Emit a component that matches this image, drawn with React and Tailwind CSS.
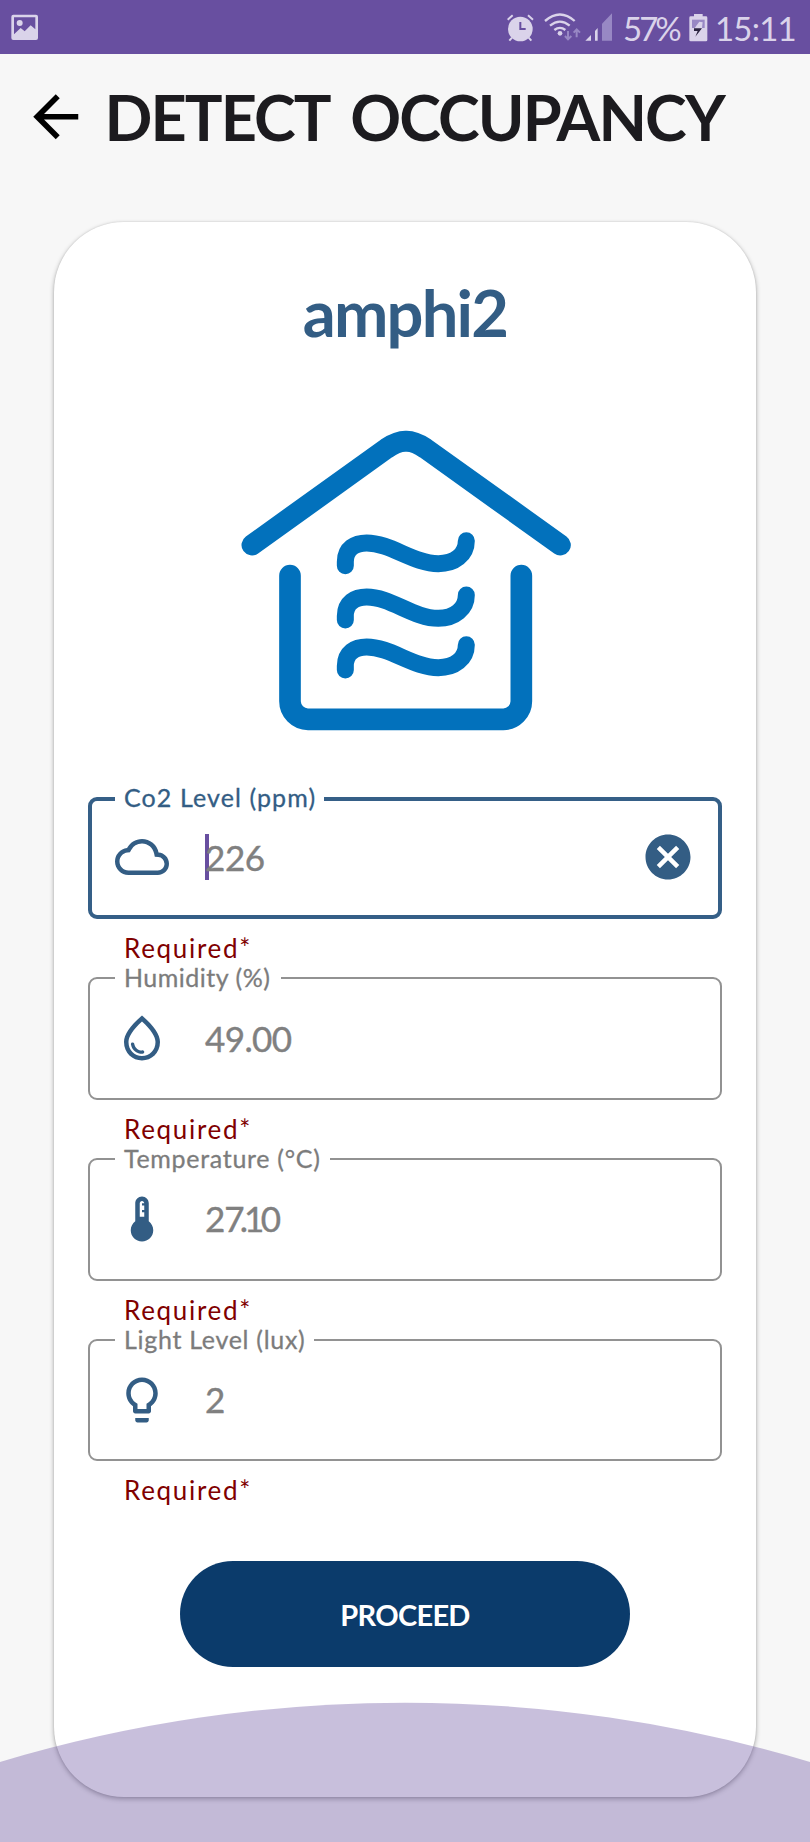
const ICONS = {
  cloud:
    "M19.35 10.04A7.49 7.49 0 0 0 12 4C9.11 4 6.6 5.64 5.35 8.04A5.994 5.994 0 0 0 0 14c0 3.31 2.69 6 6 6h13c2.76 0 5-2.24 5-5 0-2.64-2.05-4.78-4.65-4.96zM19 18H6c-2.21 0-4-1.79-4-4 0-2.05 1.53-3.76 3.56-3.97l1.07-.11.5-.95A5.469 5.469 0 0 1 12 6c2.62 0 4.88 1.86 5.39 4.43l.3 1.5 1.53.11A2.98 2.98 0 0 1 22 15c0 1.65-1.35 3-3 3z",
  drop:
    "M12 2c-5.33 4.55-8 8.48-8 11.8 0 4.98 3.8 8.2 8 8.2s8-3.22 8-8.2c0-3.32-2.67-7.25-8-11.8zm0 18c-3.35 0-6-2.57-6-6.2 0-2.34 1.95-5.44 6-9.14 4.05 3.7 6 6.79 6 9.14 0 3.63-2.65 6.2-6 6.2zm-4.17-6c.37 0 .67.26.74.62.41 2.22 2.28 2.98 3.64 2.87.43-.02.79.32.79.75 0 .4-.32.73-.72.75-2.13.13-4.62-1.09-5.19-4.12A.75.75 0 0 1 7.83 14z",
  thermometer:
    "M15 13V5c0-1.66-1.34-3-3-3S9 3.34 9 5v8c-1.21.91-2 2.37-2 4 0 2.76 2.24 5 5 5s5-2.24 5-5c0-1.63-.79-3.09-2-4zm-4-8c0-.55.45-1 1-1s1 .45 1 1h-1v1h1v2h-1v1h1v2h-2V5z",
  bulb:
    "M9 21c0 .55.45 1 1 1h4c.55 0 1-.45 1-1v-1H9v1zm3-19C8.14 2 5 5.14 5 9c0 2.38 1.19 4.47 3 5.74V17c0 .55.45 1 1 1h6c.55 0 1-.45 1-1v-2.26c1.81-1.27 3-3.36 3-5.74 0-3.86-3.14-7-7-7zm2.85 11.1l-.85.6V16h-4v-2.3l-.85-.6A4.997 4.997 0 0 1 7 9c0-2.76 2.24-5 5-5s5 2.24 5 5c0 1.63-.8 3.16-2.15 4.1z",
  back: "M20 11H7.83l5.59-5.59L12 4l-8 8 8 8 1.41-1.41L7.83 13H20v-2z",
  clear:
    "M12 2C6.47 2 2 6.47 2 12s4.47 10 10 10 10-4.47 10-10S17.53 2 12 2zm5 13.59L15.59 17 12 13.41 8.41 17 7 15.59 10.59 12 7 8.41 8.41 7 12 10.59 15.59 7 17 8.41 13.41 12 17 15.59z",
};

function Icon({ name, className }) {
  return (
    <svg viewBox="0 0 24 24" fill="currentColor" className={`shrink-0 ${className}`}>
      <path d={ICONS[name]} />
    </svg>
  );
}

function StatusBar() {
  return (
    <div className="flex h-[54px] items-start bg-[#684fa0] text-[#dad3ea]">
      <svg viewBox="0 0 150 162" className="h-[54px] w-[50px]">
        <path
          fill="currentColor"
          fillRule="evenodd"
          d="M40 44H108Q114 44 114 50V114Q114 120 108 120H40Q34 120 34 114V50Q34 44 40 44ZM42 52V103L62 84L74 94L92 76L106 88V52Z"
        />
        <circle cx="59" cy="69" r="9" fill="currentColor" />
      </svg>
      <svg viewBox="285 0 360 162" className="ml-[450px] h-[54px] w-[120px]">
        <g fill="none" stroke="currentColor">
          <path strokeWidth="6" d="M308 59L323 46M384 59L369 46M321 113L313 122M371 113L379 122" />
          <path strokeWidth="7" d="M420 63Q465 24 509 63M435 77Q465 53 494 77M448 90Q465 77 481 90" />
        </g>
        <circle cx="346" cy="87" r="37" fill="currentColor" />
        <path d="M346 66V87H362" fill="none" stroke="#684fa0" strokeWidth="6" />
        <circle cx="465" cy="100" r="7" fill="currentColor" />
        <g fill="none" stroke="#9888c4" strokeWidth="6">
          <path d="M489 93V117M480 108L489 118L499 108" />
          <path d="M515 112V88M506 98L515 88L525 98" />
        </g>
        <path fill="currentColor" d="M541 122L558 105V122ZM570 93L578 84V122H570Z" />
        <path fill="#9888c4" d="M591 71L621 40V122H591Z" />
      </svg>
      <span className="ml-[3px] w-[64px] whitespace-nowrap text-[33px] leading-[56px] tracking-[-3px]">57%</span>
      <svg viewBox="0 0 60 162" className="ml-[1px] h-[54px] w-[20px]">
        <path fill="currentColor" d="M18 42H44V49H54Q58 49 58 53V120Q58 124 54 124H8Q4 124 4 120V53Q4 49 8 49H18Z" />
        <path fill="#9888c4" d="M12 59H50V84H12Z" />
        <path fill="currentColor" d="M34 65L20 84H42L44 67Z" />
        <path fill="#2b2440" d="M18 85H42L22 110L29 93H18Z" />
      </svg>
      <span className="ml-[7px] whitespace-nowrap text-[33px] leading-[56px] tracking-[-0.8px]">15:11</span>
    </div>
  );
}

function HouseLogo() {
  return (
    <svg viewBox="0 0 1110 1020" className="mx-auto mt-[63px] h-[340px] w-[370px]" fill="none" stroke="#0271bc" strokeLinecap="round">
      <path strokeWidth="63" d="M96 405L500 115Q534 93 558 94Q582 93 616 115L1021 405" />
      <path strokeWidth="65" d="M210 497V874C210 903 234 928 264 928H850C880 928 904 903 904 874V497" />
      <g strokeWidth="51">
        <path d="M376 467V455C376 415 405 399 440 399C512 399 580 461 655 461C704 461 739 434 739 392" />
        <path d="M376 630V618C376 578 405 561 440 561C512 561 580 625 655 625C704 625 739 596 739 555" />
        <path d="M376 780V768C376 728 405 711 440 711C512 711 580 773 655 773C704 773 739 746 739 704" />
      </g>
    </svg>
  );
}

function Field({ label, labelClass, icon, active, children }) {
  return (
    <div className="flex h-[180.7px] flex-col">
      <div
        className={`relative flex h-[122.5px] shrink-0 items-center rounded-[9px] ${
          active ? "border-4 border-[#355f87] pr-[23px] pl-[23px]" : "border-2 border-[#929292] pl-[25px]"
        }`}
      >
        <span
          className={`absolute h-[26px] whitespace-nowrap bg-white pl-[9px] text-[25px] leading-[26px] [-webkit-text-stroke:0.3px_currentColor] ${labelClass} ${
            active ? "-top-[17px] left-[23px] text-[#335d84]" : "-top-[15px] left-[25px] text-[#7c7c7c]"
          }`}
        >
          {label}
        </span>
        <Icon name={icon} className="mb-px size-[54px] text-[#335d84]" />
        <div className="mb-[2px] ml-[36px] flex items-center text-[35px] leading-[46px] text-[#808080] [-webkit-text-stroke:0.4px_currentColor]">
          {active && <span className="-mr-[4px] h-[46px] w-[4px] bg-[#684fa0]" />}
          {children}
        </div>
        {active && <Icon name="clear" className="mb-[2px] ml-auto size-[54px] text-[#335d84]" />}
      </div>
      <p className="pl-[36px] text-[26px] leading-[58px] tracking-[1.7px] text-[#800000]">Required*</p>
    </div>
  );
}

export default function App() {
  return (
    <div className="relative h-[1842px] w-[810px] overflow-hidden bg-[#f7f7f7] font-['Lato',sans-serif]">
      <StatusBar />
      <header className="flex h-[124px] items-center pt-px pl-[22px]">
        <Icon name="back" className="size-[67.5px] text-black" />
        <h1 className="ml-[15px] whitespace-nowrap pt-px text-[63px] leading-[64px] font-bold tracking-[-1.9px] text-[#1c1b1f] [word-spacing:9px]">
          DETECT OCCUPANCY
        </h1>
      </header>
      <main className="mx-[54px] mt-[44px] flex h-[1575px] flex-col rounded-[70px] bg-white px-[34px] pt-[55px] shadow-[0_2px_5px_rgba(0,0,0,0.32),0_0_2px_rgba(0,0,0,0.12)]">
        <h2 className="text-center text-[65px] leading-[70px] font-bold tracking-[-1.8px] text-[#335d84]">amphi2</h2>
        <HouseLogo />
        <div className="mt-[46.7px]">
          <Field label="Co2 Level (ppm)" labelClass="w-[209px] tracking-[1.1px]" icon="cloud" active>
            <span className="relative tracking-[-0.4px]">226</span>
          </Field>
          <Field label="Humidity (%)" labelClass="w-[166px] tracking-[0.5px]" icon="drop">
            <span className="tracking-[-0.6px]">49.00</span>
          </Field>
          <Field label="Temperature (°C)" labelClass="w-[215px] tracking-[0.7px]" icon="thermometer">
            <span className="tracking-[-1px]">
              2<span className="tracking-[-5px]">7</span>
              <span className="tracking-[-4px]">.</span>
              <span className="tracking-[-3.5px]">1</span>0
            </span>
          </Field>
          <Field label="Light Level (lux)" labelClass="w-[199px] tracking-[0.7px]" icon="bulb">
            <span>2</span>
          </Field>
        </div>
        <button className="mx-auto mt-[41.5px] h-[106px] w-[450px] shrink-0 rounded-full bg-[#0b3b6b] pt-[2px] text-[29px] font-bold tracking-[-0.7px] text-white">
          PROCEED
        </button>
      </main>
      <svg viewBox="0 0 810 140" className="pointer-events-none absolute bottom-0 left-0 h-[140px] w-[810px]">
        <path fill="#684fa0" fillOpacity="0.365" d="M0 60A1412 1412 0 0 1 810 60V140H0Z" />
      </svg>
    </div>
  );
}
